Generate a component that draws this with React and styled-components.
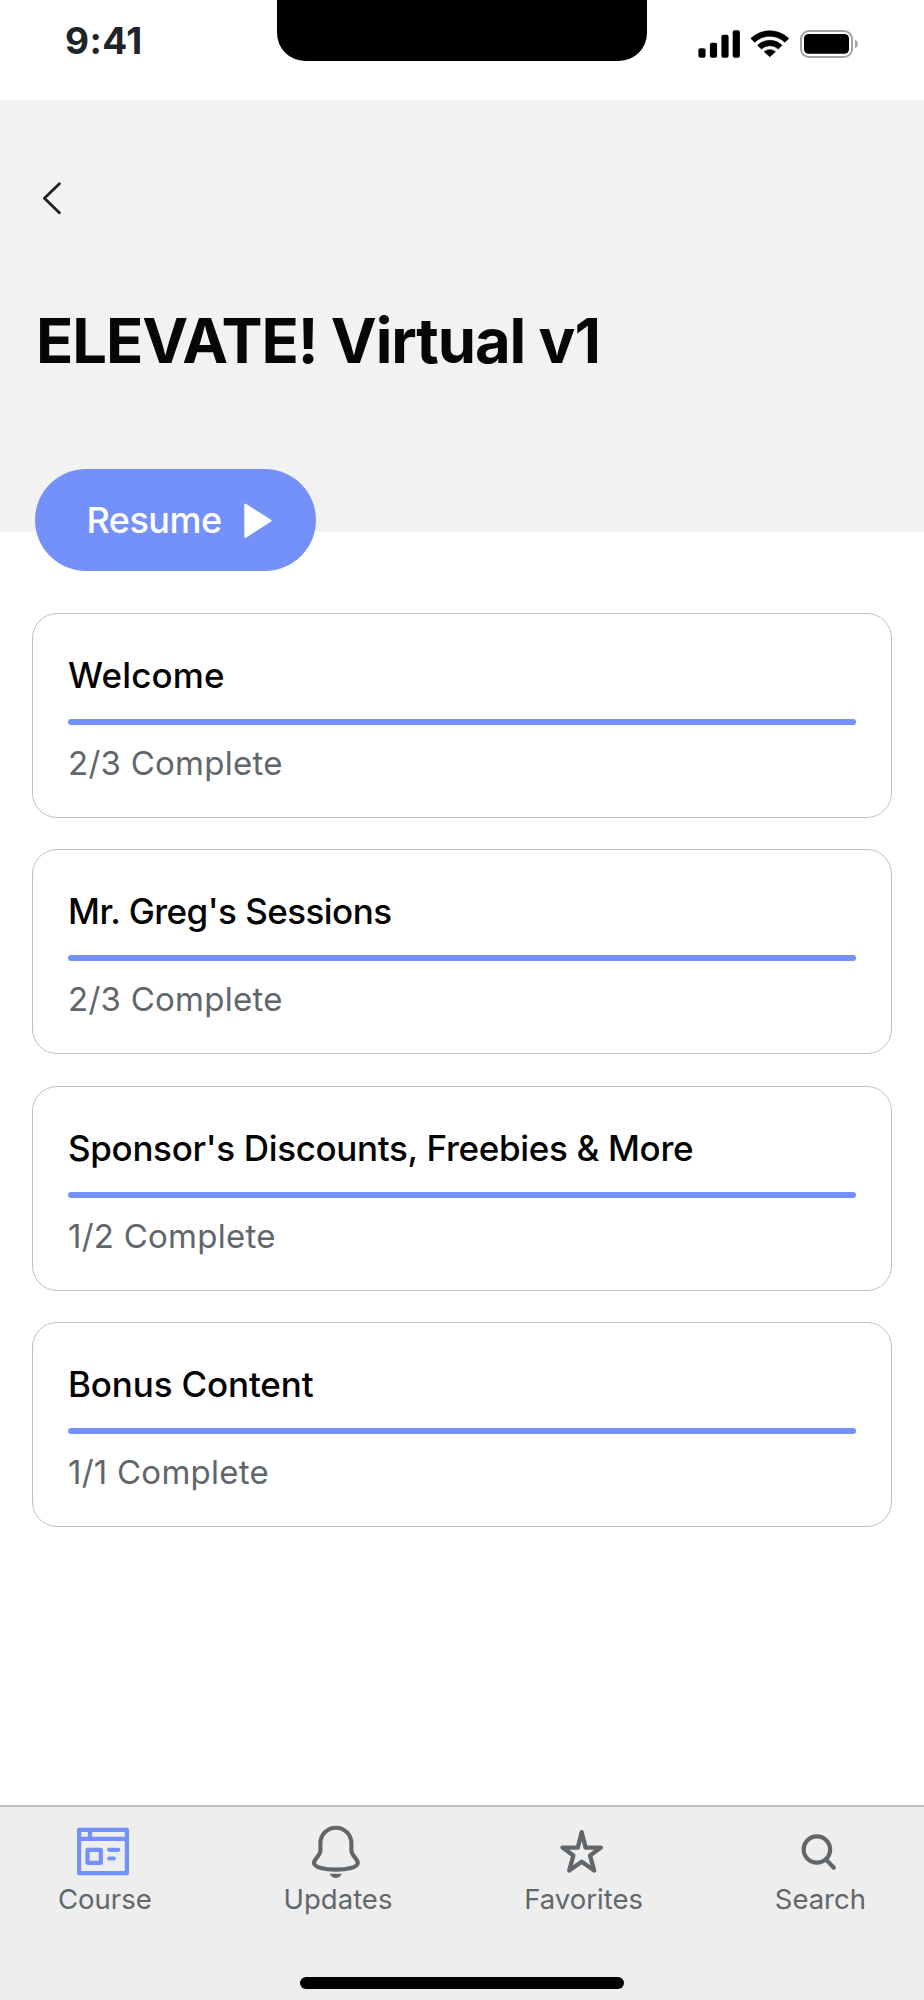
import React from 'react'
import styled, { createGlobalStyle } from 'styled-components';

const sections = [
  { title: 'Welcome', done: '2/3 Complete', tracking: '0.15px' },
  { title: "Mr. Greg's Sessions", done: '2/3 Complete', tracking: '-0.55px' },
  { title: "Sponsor's Discounts, Freebies & More", done: '1/2 Complete', tracking: '-0.33px' },
  { title: 'Bonus Content', done: '1/1 Complete', tracking: '-0.15px' },
];

const CourseIcon = () => (
  <svg viewBox="0 0 56 56" fill="none" stroke="currentColor" strokeWidth="4.2" strokeLinejoin="round">
    <path d="M4.1 7.8H51.9V51.2H4.1ZM4.1 16.8H51.9M15 8V16" />
    <path d="M12.5 27.9H25.8V40.8H12.5Z" />
    <path d="M34.2 27.8H43.2M34.2 36.5H38.8" strokeLinecap="round" />
  </svg>
);

const BellIcon = () => (
  <svg viewBox="0 0 56 56" fill="none" stroke="currentColor" strokeWidth="4.1">
    <path d="M27.9 5.7C19.3 5.7 12.4 12.7 12.4 21.2V28.5C12.4 34 6 36.5 6 41C6 45.5 17 47.6 27.9 47.6C38.8 47.6 49.8 45.5 49.8 41C49.8 36.5 43.4 34 43.4 28.5V21.2C43.4 12.7 36.5 5.7 27.9 5.7Z" />
    <path d="M21.7 51.7H33.9C32.3 54.6 30.3 56 27.8 56S23.3 54.6 21.7 51.7Z" fill="currentColor" stroke="none" />
  </svg>
);

const StarIcon = () => (
  <svg viewBox="0 0 56 56" fill="none" stroke="currentColor" strokeWidth="4.3" strokeLinejoin="round">
    <path d="M27.7 10.2L31.6 25.6H46.9L36 33.4L40.2 48.6L27.7 39.7L15.2 48.6L19.4 33.4L8.5 25.6H23.8Z" />
  </svg>
);

const SearchIcon = () => (
  <svg viewBox="0 0 56 56" fill="none" stroke="currentColor" strokeWidth="4.2" strokeLinecap="round">
    <circle cx="25.9" cy="27.5" r="13.2" />
    <path d="M35.2 37.6L42.8 45.8" />
  </svg>
);

const tabs = [
  { label: 'Course', icon: <CourseIcon />, active: true },
  { label: 'Updates', icon: <BellIcon /> },
  { label: 'Favorites', icon: <StarIcon /> },
  { label: 'Search', icon: <SearchIcon /> },
];

const App = () => {
  return (
    <>
      <GlobalStyle />
      <Screen>
        <StatusBar>
          <Time>9:41</Time>
          <Notch />
          <StatusIcons>
            <svg width="42" height="28" viewBox="0 0 42 28">
              <rect x="0.4" y="18.3" width="7.2" height="9.4" rx="2" />
              <rect x="11.9" y="12.7" width="7.2" height="15" rx="2" />
              <rect x="23.4" y="4.7" width="7.2" height="23" rx="2" />
              <rect x="34.7" y="0.3" width="7.2" height="27.4" rx="2" />
            </svg>
            <svg width="40" height="28" viewBox="0 0 40 28" stroke="#000" strokeWidth="0.6" strokeLinejoin="round">
              <path d="M0.8 8.4A27.5 27.5 0 0 1 38.8 8.4L34.9 12.3A21.8 21.8 0 0 0 4.7 12.3Z" />
              <path d="M7.5 15.2A17.8 17.8 0 0 1 32.1 15.2L28.2 19A12.4 12.4 0 0 0 11.4 19Z" />
              <path d="M14.2 21.7A8.6 8.6 0 0 1 25.4 21.7L19.8 26.8Z" />
            </svg>
            <svg width="58" height="28" viewBox="0 0 58 28">
              <rect x="1" y="1" width="51" height="26" rx="8" fill="none" stroke="#a3a3a3" strokeWidth="2" />
              <rect x="4" y="4" width="45" height="19.8" rx="4.5" />
              <path d="M55 9.8C58.8 11.2 58.8 16.8 55 18.2Z" fill="#a3a3a3" />
            </svg>
          </StatusIcons>
        </StatusBar>

        <Header>
          <Back aria-label="Back">
            <svg width="22" height="34" viewBox="0 0 22 34" fill="none" stroke="#1c2024" strokeWidth="2.8" strokeLinecap="round" strokeLinejoin="round">
              <path d="M19.4 2.8L4.4 17.3L19.4 31.8" />
            </svg>
          </Back>
          <Title>ELEVATE! Virtual v1</Title>
        </Header>

        <Content>
          <Resume>
            <span>Resume</span>
            <svg width="28" height="36" viewBox="0 0 28 36" fill="#fff" stroke="#fff" strokeWidth="2" strokeLinejoin="round">
              <path d="M1.3 2.5V34.8L26.6 18.7Z" />
            </svg>
          </Resume>
          <List>
            {sections.map((s) => (
              <Card key={s.title}>
                <CardTitle $tracking={s.tracking}>{s.title}</CardTitle>
                <Progress />
                <CardText>{s.done}</CardText>
              </Card>
            ))}
          </List>
        </Content>

        <TabBar>
          <Tabs>
            {tabs.map((t) => (
              <Tab key={t.label}>
                <TabIcon $active={t.active}>{t.icon}</TabIcon>
                <p>{t.label}</p>
              </Tab>
            ))}
          </Tabs>
          <HomeIndicator />
        </TabBar>
      </Screen>
    </>
  )
}

export default App

// <----------------------------------------- CSS ------------------------------------------------->

const GlobalStyle = createGlobalStyle`
*{
    box-sizing: border-box;
    margin: 0;
    padding: 0;
}
body{
    background-color: #fff;
    font-family: Inter, "Liberation Sans", sans-serif;
}
svg{
    display: block;
    flex-shrink: 0;
}
`;

const Screen = styled.div`
width: 924px;
height: 2000px;
display: flex;
flex-direction: column;
background-color: #fff;
overflow: hidden;
`;

const StatusBar = styled.div`
height: 100px;
padding: 0 66px 0 65px;
display: grid;
grid-template-columns: 212px 370px 1fr;
align-items: start;
`;

const Time = styled.p`
padding-top: 18px;
font-size: 37px;
line-height: 45px;
font-weight: 650;
letter-spacing: 0.4px;
color: #1f2429;
`;

const Notch = styled.div`
height: 61px;
border-radius: 0 0 28px 28px;
background-color: #000;
`;

const StatusIcons = styled.div`
padding-top: 30px;
display: flex;
justify-content: flex-end;
gap: 10px;
`;

const Header = styled.div`
height: 432px;
padding: 81px 35px 0;
background-color: #f2f2f2;
`;

const Back = styled.button`
display: block;
margin-left: 5px;
border: none;
background: none;
cursor: pointer;
`;

const Title = styled.h1`
margin-top: 86px;
padding-left: 1px;
font-size: 61.5px;
line-height: 80px;
font-weight: 700;
letter-spacing: -1.1px;
white-space: nowrap;
color: #040607;
`;

const Content = styled.div`
flex: 1;
padding: 0 32px;
`;

const Resume = styled.button`
display: flex;
align-items: center;
width: 281px;
height: 102px;
margin: -63px 0 0 2.5px;
padding-left: 52px;
border: none;
border-radius: 51px;
background-color: #7391f8;
color: #fff;
font-family: inherit;
font-size: 36px;
font-weight: 500;
letter-spacing: -0.5px;
cursor: pointer;

span{
    width: 157.5px;
    text-align: left;
}
`;

const List = styled.div`
display: flex;
flex-direction: column;
gap: 31.3px;
margin-top: 42px;
`;

const Card = styled.div`
height: 205px;
padding: 39px 35px 0;
border: 1px solid #c0c1c2;
border-radius: 25px;
`;

const CardTitle = styled.h2`
font-size: 35px;
line-height: 44px;
font-weight: 550;
letter-spacing: ${(props) => props.$tracking};
white-space: nowrap;
color: #040404;
`;

const Progress = styled.div`
height: 6px;
margin-top: 22px;
border-radius: 3px;
background-color: #7391f8;
`;

const CardText = styled.p`
margin-top: 18px;
font-size: 33px;
line-height: 40px;
letter-spacing: 0.25px;
color: #61666b;
`;

const TabBar = styled.div`
height: 195px;
display: flex;
flex-direction: column;
align-items: center;
justify-content: space-between;
padding: 15px 58px 11.5px;
border-top: 2px solid #b9bcb9;
background-color: #eee;
`;

const Tabs = styled.div`
width: 100%;
display: flex;
justify-content: space-between;
`;

const Tab = styled.div`
display: flex;
flex-direction: column;
align-items: center;

p{
    margin-top: 3px;
    font-size: 27.5px;
    line-height: 36px;
    color: #61666b;
}
`;

const TabIcon = styled.div`
width: 56px;
height: 56px;
margin-right: 3px;
color: ${(props) => (props.$active ? '#7391f8' : '#61666b')};
`;

const HomeIndicator = styled.div`
width: 324px;
height: 12px;
border-radius: 6px;
background-color: #000;
`;
